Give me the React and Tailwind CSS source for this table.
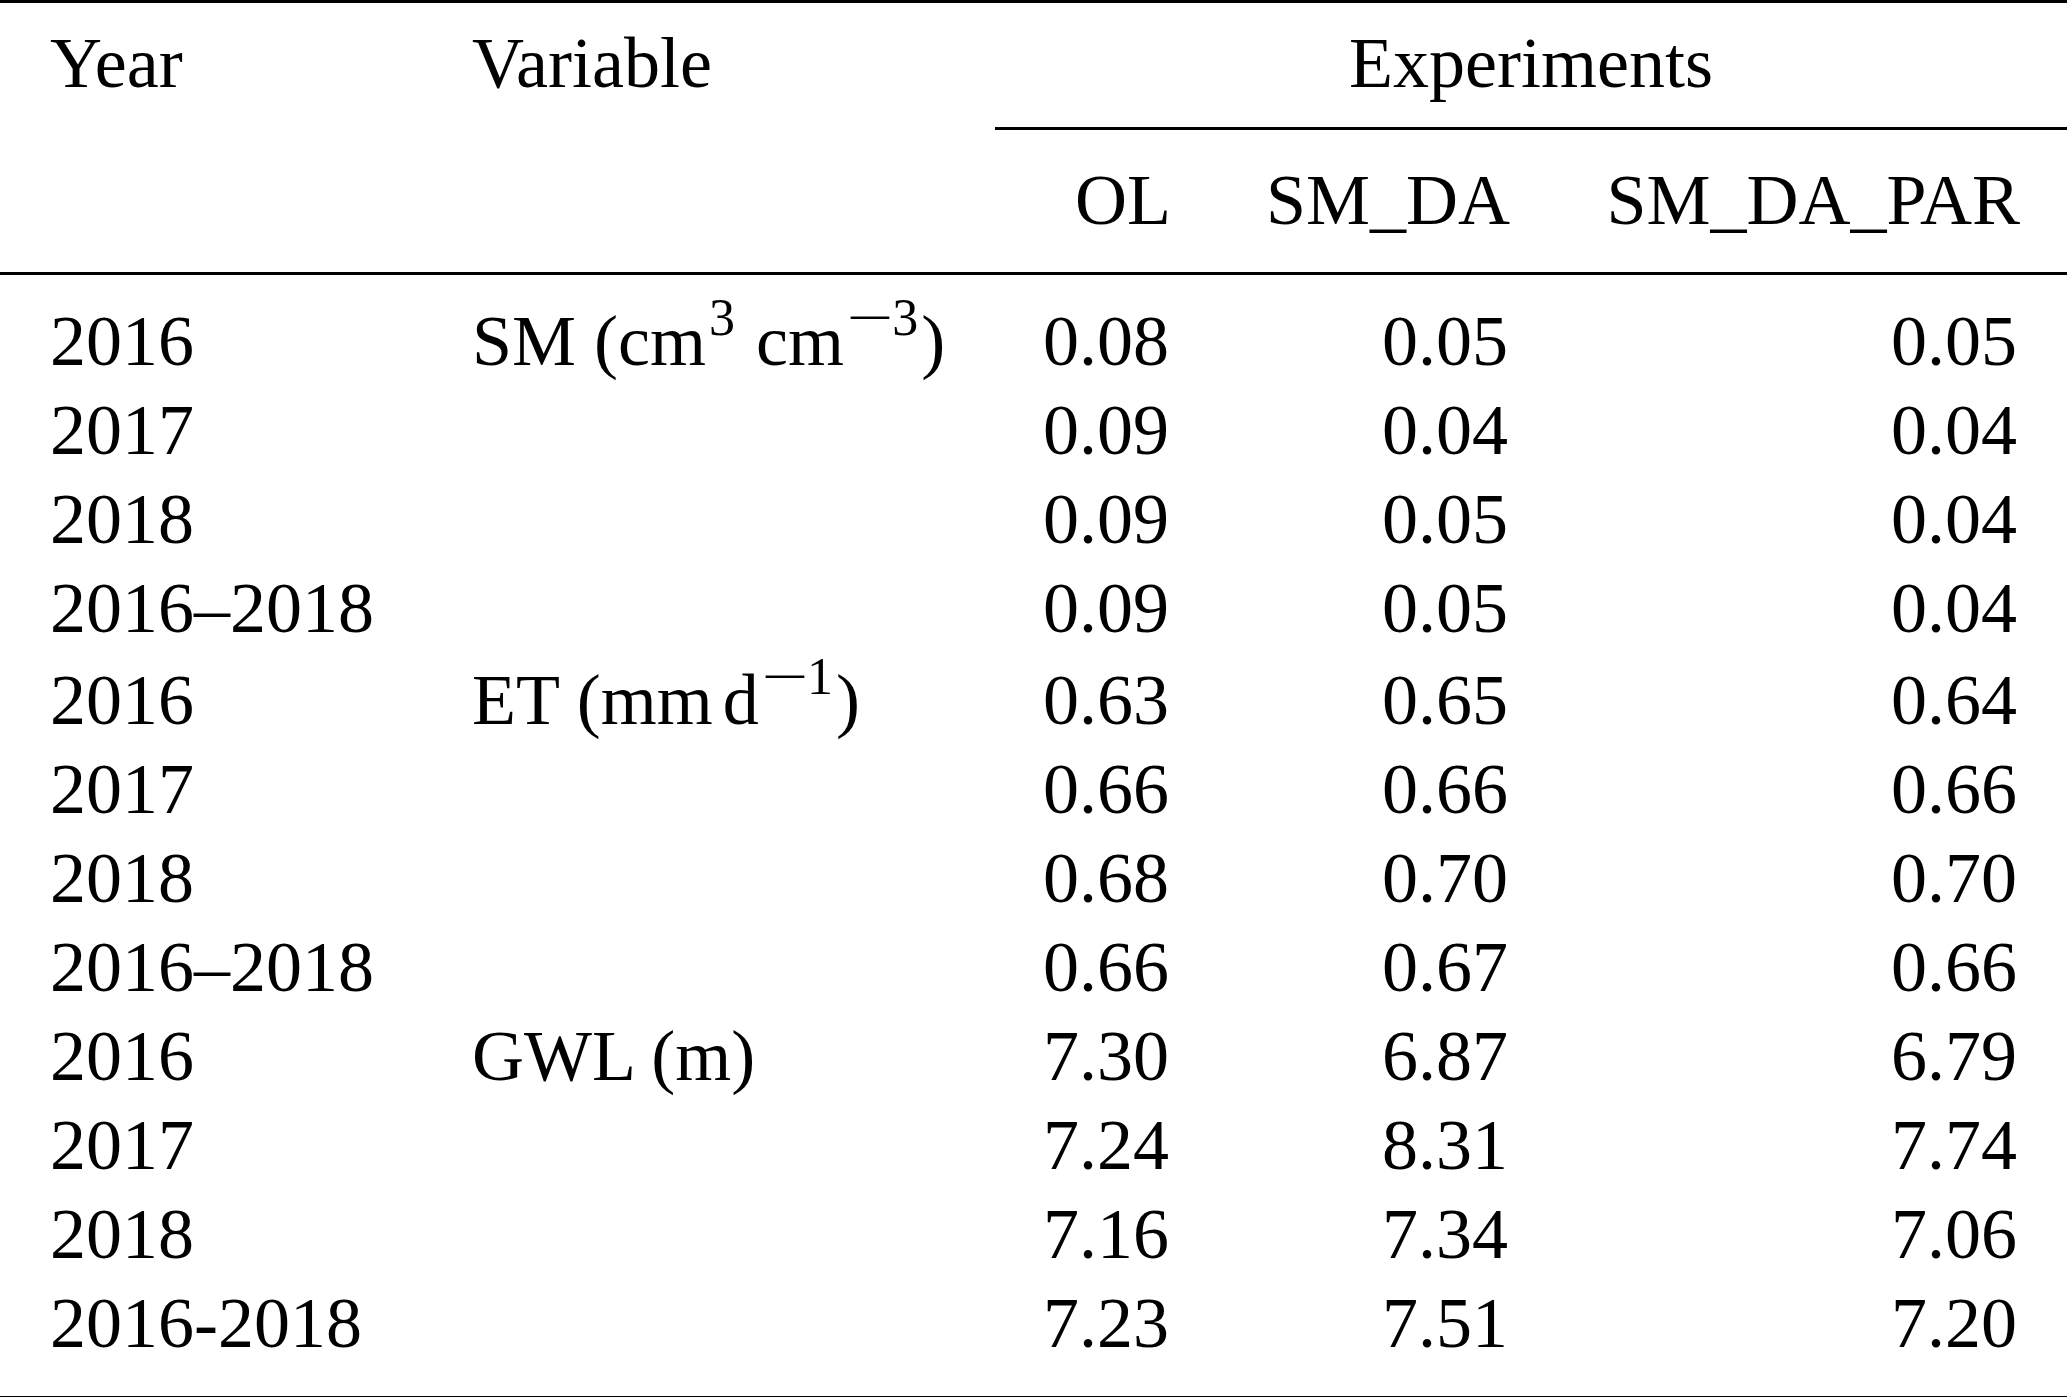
import React from 'react';

const cols = 'grid grid-cols-[472px_523px_223px_339px_510px]';

const rows = [
    ['2016', 'sm', '0.08', '0.05', '0.05'],
    ['2017', null, '0.09', '0.04', '0.04'],
    ['2018', null, '0.09', '0.05', '0.04'],
    ['2016–2018', null, '0.09', '0.05', '0.04'],
    ['2016', 'et', '0.63', '0.65', '0.64'],
    ['2017', null, '0.66', '0.66', '0.66'],
    ['2018', null, '0.68', '0.70', '0.70'],
    ['2016–2018', null, '0.66', '0.67', '0.66'],
    ['2016', 'gwl', '7.30', '6.87', '6.79'],
    ['2017', null, '7.24', '8.31', '7.74'],
    ['2018', null, '7.16', '7.34', '7.06'],
    ['2016-2018', null, '7.23', '7.51', '7.20'],
];

const Sup = ({ children }) => (
    <span className="text-[52px] leading-[0px] align-[30px] ml-[3px] mr-[3px]">{children}</span>
);

// math minus is wider than the text one
const Minus = () => <span className="inline-block scale-x-[1.6] mx-[8px]">−</span>;

const Variable = ({ kind }) => {
    if (kind === 'sm') {
        return (
            <span>
                SM (cm<Sup>3</Sup> cm<Sup><Minus />3</Sup>)
            </span>
        );
    }
    if (kind === 'et') {
        return (
            <span>
                ET (mm<span className="ml-[10px]">d</span>
                <Sup><Minus />1</Sup>)
            </span>
        );
    }
    if (kind === 'gwl') return <span>GWL (m)</span>;
    return null;
};

const Rule = () => <div className="h-[3px] bg-black" />;

export default function App() {
    return (
        <div className="w-[2067px] min-h-[1397px] bg-white text-black font-['Liberation_Serif','Times_New_Roman',serif] text-[72px] leading-[89px]">
            <Rule />

            {/* header, first line */}
            <div className={`${cols} pt-[16px]`}>
                <div className="pl-[50px]">Year</div>
                <div>Variable</div>
                <div className="col-span-3 text-center">Experiments</div>
            </div>

            {/* cmidrule under Experiments */}
            <div className={`${cols} mt-[19px]`}>
                <div className="col-start-3 col-span-3 h-[3px] bg-black" />
            </div>

            {/* header, second line */}
            <div className={`${cols} pt-[26px]`}>
                <div />
                <div />
                <div className="text-right pr-[47px]">OL</div>
                <div className="text-right pr-[47px]">SM_DA</div>
                <div className="text-right pr-[47px]">SM_DA_PAR</div>
            </div>

            <div className="mt-[27px]">
                <Rule />
            </div>

            <div className="pt-[22px]">
                {rows.map((r, i) => (
                    <div key={i} className={`${cols} ${r[1] === 'et' ? 'pt-[3px]' : ''}`}>
                        <div className="pl-[50px]">{r[0]}</div>
                        <div className="whitespace-nowrap">
                            <Variable kind={r[1]} />
                        </div>
                        <div className="text-right pr-[49px]">{r[2]}</div>
                        <div className="text-right pr-[49px]">{r[3]}</div>
                        <div className="text-right pr-[50px]">{r[4]}</div>
                    </div>
                ))}
            </div>

            <div className="mt-[28px]">
                <Rule />
            </div>
        </div>
    );
}
